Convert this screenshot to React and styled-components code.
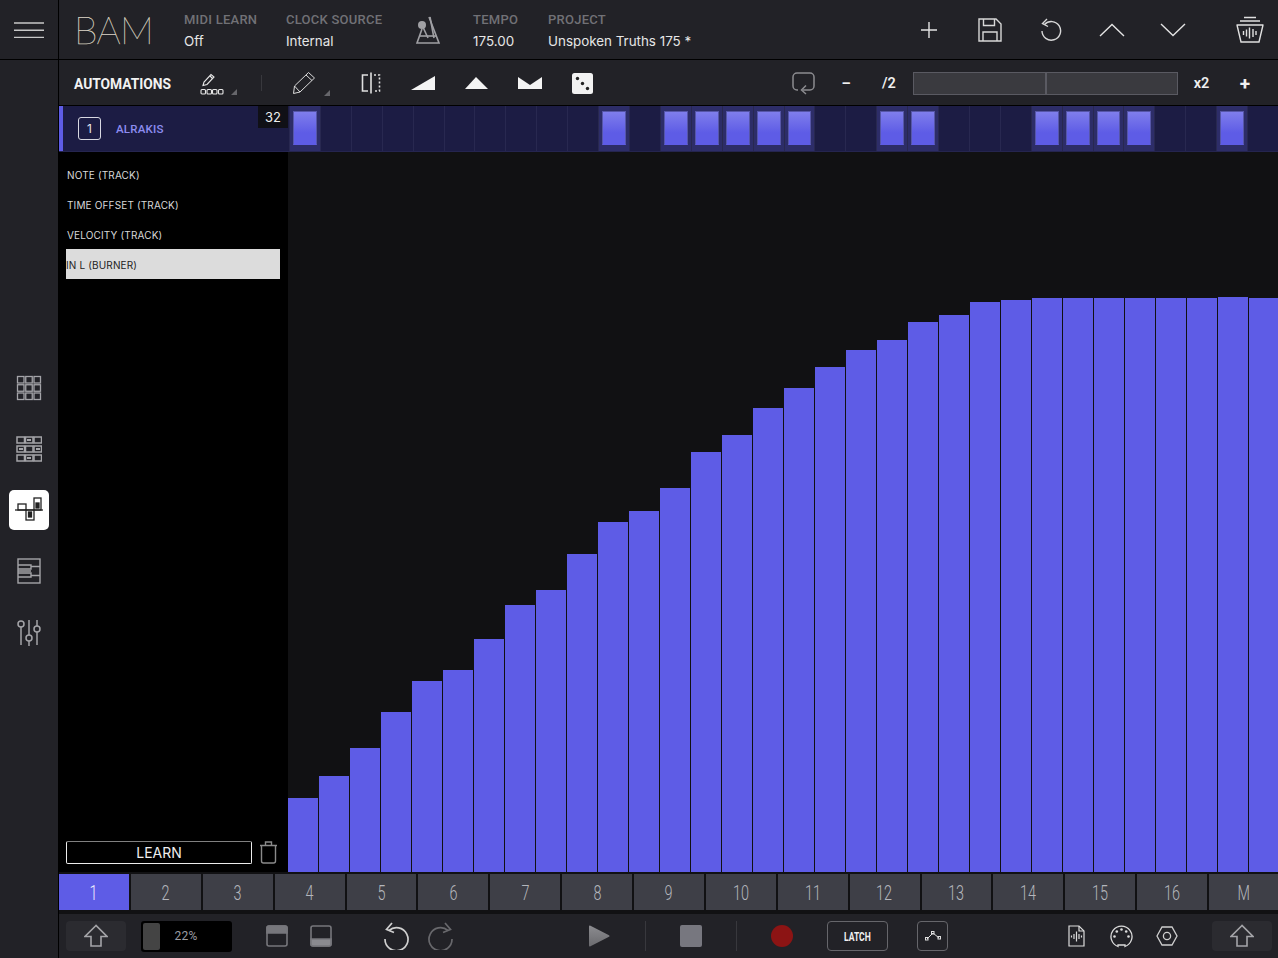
import React from "react";
import styled, { createGlobalStyle } from "styled-components";

const ACCENT = "#5e5ce6";

const BAR_TOPS = [
  798, 776, 748, 712, 681, 670, 639, 605, 590, 554, 522, 511, 488, 452, 435, 408,
  388, 367, 350, 340, 322, 315, 302, 300, 298, 298, 298, 298, 298, 298, 297, 298,
];
const ACTIVE_STEPS = [0, 10, 12, 13, 14, 15, 16, 19, 20, 24, 25, 26, 27, 30];
const TABS = ["1", "2", "3", "4", "5", "6", "7", "8", "9", "10", "11", "12", "13", "14", "15", "16", "M"];
const PARAMS = ["NOTE (TRACK)", "TIME OFFSET (TRACK)", "VELOCITY (TRACK)", "IN L (BURNER)"];

const GlobalStyle = createGlobalStyle`
  html, body { margin: 0; padding: 0; background: #222227; }
  body { font-family: Inter, "Liberation Sans", sans-serif; overflow: hidden; }
  * { box-sizing: border-box; }
  svg { display: block; }
`;

const Shell = styled.div`
  width: 1278px;
  height: 958px;
  display: flex;
  flex-direction: column;
  background: #222227;
  color: #eee;
`;

const Header = styled.header`
  height: 60px;
  flex: none;
  display: flex;
  align-items: stretch;
  border-bottom: 1px solid #000;
`;

const MenuCell = styled.div`
  width: 59px;
  flex: none;
  display: flex;
  align-items: center;
  justify-content: center;
  border-right: 1px solid #000;
`;

const Logo = styled.div`
  width: 125px;
  padding-left: 15px;
  font-family: Lato, sans-serif;
  font-weight: 100;
  font-size: 38px;
  line-height: 58px;
  letter-spacing: -0.7px;
  color: #f2ead8;
  -webkit-text-stroke: 0.25px #d8d2c6;
`;

const Field = styled.div`
  width: ${(p) => p.$w}px;
  flex: none;
  display: flex;
  flex-direction: column;
  padding-top: 12px;
`;

const FieldLabel = styled.span`
  font-family: Roboto, sans-serif;
  font-weight: 500;
  font-size: 13px;
  line-height: 16px;
  letter-spacing: 0.25px;
  color: #717176;
`;

const FieldValue = styled.span`
  margin-top: 5px;
  font-size: 13.4px;
  line-height: 17px;
  color: #e6e6e6;
`;

const IconCell = styled.div`
  width: ${(p) => p.$w || 61}px;
  margin-left: ${(p) => p.$ml || 0}px;
  flex: none;
  display: flex;
  align-items: center;
  justify-content: center;
`;

const Spacer = styled.div`
  flex: 1;
`;

const Body = styled.div`
  flex: 1;
  min-height: 0;
  display: flex;
`;

const Sidebar = styled.nav`
  width: 59px;
  flex: none;
  display: flex;
  flex-direction: column;
  align-items: center;
  justify-content: center;
  gap: 21px;
  padding: 2px 1px 0 0;
  border-right: 1px solid #000;
`;

const SideButton = styled.div`
  width: 40px;
  height: 40px;
  display: flex;
  align-items: center;
  justify-content: center;
  border-radius: 5px;
  background: ${(p) => (p.$active ? "#fff" : "transparent")};
`;

const Main = styled.main`
  flex: 1;
  min-width: 0;
  display: flex;
  flex-direction: column;
`;

const Toolbar = styled.div`
  height: 46px;
  flex: none;
  display: flex;
  align-items: center;
  border-bottom: 1px solid #000;
  padding: 1px 0 0 15px;
`;

const ToolbarTitle = styled.div`
  width: 126px;
  padding-top: 1px;
  font-family: Roboto, sans-serif;
  font-weight: 700;
  font-size: 13.8px;
  color: #f2f2f2;
`;

const Tool = styled.div`
  margin-left: ${(p) => p.$ml || 0}px;
  flex: none;
  position: relative;
  display: flex;
  align-items: center;
  justify-content: center;
`;

const CornerMark = styled.span`
  position: absolute;
  right: ${(p) => p.$right}px;
  bottom: ${(p) => p.$bottom}px;
  width: 0;
  height: 0;
  border-left: 6px solid transparent;
  border-bottom: 6px solid #66666b;
`;

const VDivider = styled.div`
  width: 1px;
  height: ${(p) => p.$h}px;
  margin-left: ${(p) => p.$ml}px;
  background: #38383d;
  flex: none;
`;

const ToolText = styled.span`
  margin-left: ${(p) => p.$ml}px;
  width: ${(p) => p.$w}px;
  flex: none;
  padding-top: 1px;
  text-align: center;
  font-family: Roboto, sans-serif;
  font-weight: ${(p) => p.$weight || 600};
  font-size: ${(p) => p.$size || 14.5}px;
  color: #f0f0f0;
`;

const Zoombar = styled.div`
  margin-left: 16px;
  width: 265px;
  height: 23px;
  flex: none;
  display: flex;
  background: #3a3a3f;
  border: 1px solid #5a5a62;
`;

const ZoomHandle = styled.div`
  width: 1px;
  margin-left: 131px;
  border-left: 2px solid #5a5a62;
`;

const TrackRow = styled.div`
  height: 46px;
  flex: none;
  display: flex;
  background: #1c1c44;
  border-bottom: 1px solid #25254f;
  position: relative;
`;

const TrackHead = styled.div`
  width: 230px;
  flex: none;
  display: flex;
  align-items: center;
  border-left: 4px solid ${ACCENT};
  padding-left: 15px;
`;

const TrackIndex = styled.div`
  width: 23px;
  height: 23px;
  display: flex;
  align-items: center;
  justify-content: center;
  border: 1px solid #d8d8e2;
  border-radius: 3px;
  font-size: 12px;
  color: #e8e8ee;
`;

const TrackName = styled.div`
  margin-left: 15px;
  font-family: Roboto, sans-serif;
  font-weight: 500;
  font-size: 11.5px;
  letter-spacing: 0.2px;
  color: #8d8cf0;
`;

const StepCount = styled.div`
  position: absolute;
  left: 199px;
  top: 0;
  width: 30px;
  height: 22px;
  display: flex;
  align-items: center;
  justify-content: center;
  background: #101016;
  font-size: 13px;
  color: #eee;
`;

const Steps = styled.div`
  flex: 1;
  min-width: 0;
  display: grid;
  grid-template-columns: repeat(32, 1fr);
`;

const Step = styled.div`
  display: flex;
  padding: 5px 3px 6px;
  border-left: 1px solid #282850;
  background: ${(p) => (p.$on ? "#2d2d68" : "transparent")};
`;

const StepBlock = styled.div`
  flex: 1;
  border: 1px solid #5656a8;
  border-bottom-color: #5e5ce6;
  background: linear-gradient(#7f7eec, #5e5ce6 65%);
`;

const Content = styled.div`
  flex: 1;
  min-height: 0;
  display: flex;
`;

const ParamPanel = styled.div`
  width: 229px;
  flex: none;
  display: flex;
  flex-direction: column;
  background: #000;
  padding: 7px 8px 8px 7px;
`;

const ParamRow = styled.div`
  height: 30px;
  display: flex;
  align-items: center;
  padding: 1px 0 0 ${(p) => (p.$selected ? 0 : 1)}px;
  font-size: 10px;
  letter-spacing: 0.15px;
  background: ${(p) => (p.$selected ? "#dcdcdc" : "transparent")};
  color: ${(p) => (p.$selected ? "#222" : "#d8d8d8")};
`;

const LearnRow = styled.div`
  margin-top: auto;
  display: flex;
  align-items: center;
  gap: 7px;
`;

const LearnButton = styled.div`
  width: 186px;
  height: 23px;
  display: flex;
  align-items: center;
  justify-content: center;
  border: 1px solid #ececec;
  border-top-color: #808080;
  border-radius: 2px;
  font-size: 14px;
  color: #eee;
`;

const Bars = styled.div`
  flex: 1;
  min-width: 0;
  overflow: hidden;
  display: grid;
  grid-template-columns: repeat(32, 30px);
  column-gap: 1px;
  align-items: end;
  background: #111113;
`;

const Bar = styled.div`
  background: ${ACCENT};
`;

const TabStrip = styled.div`
  height: 41px;
  flex: none;
  display: grid;
  grid-template-columns: repeat(17, 69.875px);
  gap: 2px;
  padding: 2px 0 3px;
  overflow: hidden;
  background: #111113;
`;

const Tab = styled.div`
  display: flex;
  align-items: center;
  justify-content: center;
  padding-top: 1px;
  font-family: Roboto, sans-serif;
  font-size: 20px;
  font-weight: 300;
  background: ${(p) => (p.$active ? ACCENT : "#3e3f47")};
  color: ${(p) => (p.$active ? "#f2f2ff" : "#b4b6bc")};
`;

const NarrowText = styled.span`
  display: inline-block;
  transform: scaleX(${(p) => p.$x});
`;

const Transport = styled.div`
  height: 45px;
  flex: none;
  display: flex;
  align-items: center;
  border-top: 1px solid #111113;
  padding-left: 7px;
`;

const ShiftButton = styled.div`
  width: 60px;
  height: 30px;
  margin-left: ${(p) => p.$ml || 0}px;
  flex: none;
  display: flex;
  align-items: center;
  justify-content: center;
  border-radius: 4px;
  background: #2b2b30;
`;

const Meter = styled.div`
  width: 91px;
  height: 31px;
  margin-left: 15px;
  flex: none;
  display: flex;
  align-items: center;
  padding: 2px;
  border-radius: 3px;
  background: #000;
`;

const MeterFill = styled.div`
  width: 17px;
  height: 100%;
  border-radius: 2px;
  background: #444;
`;

const MeterText = styled.span`
  width: 52px;
  text-align: center;
  font-family: Roboto, sans-serif;
  font-size: 12px;
  letter-spacing: 0.3px;
  color: #9c9ca2;
`;

const OutlineButton = styled.div`
  width: ${(p) => p.$w}px;
  height: 30px;
  margin-left: ${(p) => p.$ml}px;
  flex: none;
  display: flex;
  align-items: center;
  justify-content: center;
  border: 1px solid #66666b;
  border-radius: 4px;
  font-family: Roboto, sans-serif;
  font-weight: 700;
  font-size: 13px;
  color: #f0f0f0;
`;

const StopSquare = styled.div`
  width: 22px;
  height: 22px;
  margin-left: ${(p) => p.$ml}px;
  flex: none;
  border-radius: 2px;
  background: #77777f;
`;

const RecordDot = styled.div`
  width: 22px;
  height: 22px;
  margin-left: ${(p) => p.$ml}px;
  flex: none;
  border-radius: 50%;
  background: #8c1414;
`;

const Stroke = ({ w, h, children, color = "#d8d8d8", sw = 1.4 }) => (
  <svg width={w} height={h} viewBox={`0 0 ${w} ${h}`} fill="none" stroke={color} strokeWidth={sw}>
    {children}
  </svg>
);

const ShiftIcon = () => (
  <Stroke w={24} h={24} color="#a4a4a8" sw={1.6}>
    <path d="M12 1.5 1 12.5h6v9.5h10v-9.5h6z" />
  </Stroke>
);

const Metronome = () => (
  <Stroke w={26} h={30} color="#a0a0a4" sw={1.6}>
    <path d="M14 2 24 28H2L7 14" />
    <path d="M15 2 19 23" />
    <path d="M5 21h16" />
    <circle cx={7} cy={10} r={4} fill="#a0a0a4" stroke="none" />
    <path d="M7 10 13 23" />
  </Stroke>
);

const TrashBasket = () => (
  <Stroke w={30} h={28} color="#e0e0e0">
    <path d="M9 1.5h12M5 5h20M1.5 9h27M2 9l4 17h18l4-17" />
    <path d="M8.5 15v4M11.5 13.5v7M14.5 11.5v11M18 13v8M21 15v4" />
  </Stroke>
);

const PencilDots = () => (
  <Stroke w={24} h={23} color="#e8e8e8" sw={1.1}>
    <path d="M3 13.5 4 10l7-7.5 3 2.5-7 7.5z" />
    <path d="M10 4l2.5 2.5" />
    <rect x={1} y={17.5} width={4.5} height={4.5} rx={1} />
    <rect x={7} y={17.5} width={4.5} height={4.5} rx={1} />
    <rect x={12.5} y={17.5} width={4.5} height={4.5} rx={1} />
    <rect x={18.5} y={17.5} width={4.5} height={4.5} rx={1} />
  </Stroke>
);

const Pencil = () => (
  <Stroke w={24} h={24} color="#dcdcdc" sw={1}>
    <path d="M1.5 22.5 2.5 15 16.5 1.5l6 5.5L8 21z" />
    <path d="M14 4l6 5.5M2.5 15 8 21" />
  </Stroke>
);

const SplitIcon = () => (
  <Stroke w={20} h={22} color="#e0e0e0" sw={1.6}>
    <path d="M7 3H1.5v16H7" />
    <path d="M10 0.5v21" />
    <path d="M13 3h5.5v16H13" strokeDasharray="2 2" />
  </Stroke>
);

const Shape = ({ d, w = 24, h = 14 }) => (
  <svg width={w} height={h} viewBox={`0 0 ${w} ${h}`} fill="#f4f4f4">
    <path d={d} />
  </svg>
);

const Dice = () => (
  <svg width={21} height={21} viewBox="0 0 21 21">
    <rect width={21} height={21} rx={2.5} fill="#f2f2f2" />
    <circle cx={5.5} cy={5.5} r={1.7} fill="#222" />
    <circle cx={10.5} cy={10.5} r={1.7} fill="#222" />
    <circle cx={15.5} cy={15.5} r={1.7} fill="#222" />
  </svg>
);

const LoopIcon = () => (
  <Stroke w={23} h={23} color="#8c8c90" sw={1.5}>
    <path d="M6 18H5a4 4 0 0 1-4-4V5a4 4 0 0 1 4-4h13a4 4 0 0 1 4 4v9a4 4 0 0 1-4 4h-7" />
    <path d="M14 13.5 9.5 18l4.5 4" />
  </Stroke>
);

const SideIcons = [
  <Stroke w={26} h={26} color="#a4a4a8" sw={1.3} key="a">
    {[1.5, 9.75, 18].flatMap((y) =>
      [1.5, 9.75, 18].map((x) => <rect key={`${x}${y}`} x={x} y={y} width={6.5} height={6.5} />)
    )}
  </Stroke>,
  <Stroke w={26} h={26} color="#a4a4a8" sw={1.5} key="b">
    {[1, 10, 19].flatMap((y) =>
      [1, 9.5, 18].map((x) => <rect key={`${x}${y}`} x={x} y={y} width={7.5} height={6} />)
    )}
    <path d="M11 4h4M3 13h4M20 13h4M11 22h4" strokeWidth={2} />
  </Stroke>,
  <Stroke w={30} h={28} color="#222" sw={1.3} key="c">
    <path d="M1 14h28" />
    <rect x={4} y={8} width={8} height={6} />
    <rect x={12} y={14} width={8} height={10} />
    <rect x={20} y={2} width={7} height={12} />
    <rect x={14.5} y={16} width={3} height={5} fill="#222" />
    <rect x={22} y={7} width={3} height={5} fill="#222" />
  </Stroke>,
  <Stroke w={24} h={26} color="#a4a4a8" sw={1.4} key="d">
    <rect x={1} y={1} width={22} height={24} />
    <path d="M14 8.5h9M14 17.5h9M1 13h13" />
    <path d="M1 7h13v4H1M1 15h13v4H1" />
  </Stroke>,
  <Stroke w={24} h={27} color="#a4a4a8" sw={1.5} key="e">
    <circle cx={4} cy={5} r={3} />
    <path d="M4 8v18" />
    <path d="M12 1v15" />
    <circle cx={12} cy={19} r={3} />
    <path d="M12 22v5" />
    <path d="M20 1v6" />
    <circle cx={20} cy={10} r={3} />
    <path d="M20 13v13" />
  </Stroke>,
];

export default function App() {
  return (
    <Shell>
      <GlobalStyle />
      <Header>
        <MenuCell>
          <Stroke w={30} h={16} color="#c8c8c8" sw={1.4}>
            <path d="M0 1h30M0 8.2h30M0 15.4h30" />
          </Stroke>
        </MenuCell>
        <Logo>BAM</Logo>
        <Field $w={102}>
          <FieldLabel>MIDI LEARN</FieldLabel>
          <FieldValue>Off</FieldValue>
        </Field>
        <Field $w={127}>
          <FieldLabel>CLOCK SOURCE</FieldLabel>
          <FieldValue>Internal</FieldValue>
        </Field>
        <IconCell $w={30}>
          <Metronome />
        </IconCell>
        <IconCell $w={30} />
        <Field $w={75}>
          <FieldLabel>TEMPO</FieldLabel>
          <FieldValue>175.00</FieldValue>
        </Field>
        <Field $w={200}>
          <FieldLabel>PROJECT</FieldLabel>
          <FieldValue>Unspoken Truths 175 *</FieldValue>
        </Field>
        <Spacer />
        <IconCell>
          <Stroke w={16} h={16} color="#e4e4e4">
            <path d="M8 0v16M0 8h16" />
          </Stroke>
        </IconCell>
        <IconCell>
          <Stroke w={24} h={24} color="#d8d8d8">
            <path d="M1 1h17l5 5v17H1z" />
            <path d="M5.5 1v6.5h11V1M5 23v-9h14v9" />
          </Stroke>
        </IconCell>
        <IconCell>
          <Stroke w={22} h={24} color="#d8d8d8">
            <path d="M4.5 6.5a9.3 9.3 0 1 1-2.5 6.5" />
            <path d="M7 1 2.5 5.5 8 8.5" />
          </Stroke>
        </IconCell>
        <IconCell>
          <Stroke w={26} h={14} color="#e4e4e4">
            <path d="M1 13 13 1.5 25 13" />
          </Stroke>
        </IconCell>
        <IconCell>
          <Stroke w={26} h={14} color="#e4e4e4">
            <path d="M1 1 13 12.5 25 1" />
          </Stroke>
        </IconCell>
        <IconCell $w={56} $ml={19}>
          <TrashBasket />
        </IconCell>
      </Header>

      <Body>
        <Sidebar>
          {SideIcons.map((icon, i) => (
            <SideButton key={i} $active={i === 2}>
              {icon}
            </SideButton>
          ))}
        </Sidebar>

        <Main>
          <Toolbar>
            <ToolbarTitle>AUTOMATIONS</ToolbarTitle>
            <Tool>
              <PencilDots />
              <CornerMark $right={-13} $bottom={0} />
            </Tool>
            <VDivider $ml={37} $h={16} />
            <Tool $ml={30}>
              <Pencil />
              <CornerMark $right={-14} $bottom={-1} />
            </Tool>
            <Tool $ml={45}>
              <SplitIcon />
            </Tool>
            <Tool $ml={30}>
              <Shape d="M0 14 24 0v14z" />
            </Tool>
            <Tool $ml={30}>
              <Shape d="M0 13 11 1l12 12z" />
            </Tool>
            <Tool $ml={29}>
              <Shape d="M0 1l12 8 12-8v12H0z" />
            </Tool>
            <Tool $ml={30}>
              <Dice />
            </Tool>
            <Tool $ml={199}>
              <LoopIcon />
            </Tool>
            <ToolText $ml={25} $w={12} $weight={700}>
              –
            </ToolText>
            <ToolText $ml={29} $w={16}>
              /2
            </ToolText>
            <Zoombar>
              <ZoomHandle />
            </Zoombar>
            <ToolText $ml={15} $w={17}>
              x2
            </ToolText>
            <ToolText $ml={27} $w={16} $size={19} $weight={700}>
              +
            </ToolText>
          </Toolbar>

          <TrackRow>
            <TrackHead>
              <TrackIndex>1</TrackIndex>
              <TrackName>ALRAKIS</TrackName>
            </TrackHead>
            <StepCount>32</StepCount>
            <Steps>
              {BAR_TOPS.map((_, i) => {
                const on = ACTIVE_STEPS.includes(i);
                return (
                  <Step key={i} $on={on}>
                    {on && <StepBlock />}
                  </Step>
                );
              })}
            </Steps>
          </TrackRow>

          <Content>
            <ParamPanel>
              {PARAMS.map((p, i) => (
                <ParamRow key={p} $selected={i === 3}>
                  {p}
                </ParamRow>
              ))}
              <LearnRow>
                <LearnButton>LEARN</LearnButton>
                <Stroke w={19} h={23} color="#8a8a8a">
                  <path d="M1 4.5h17M6.5 4.5V1h6v3.5M2.5 4.5V20a2 2 0 0 0 2 2h10a2 2 0 0 0 2-2V4.5" />
                </Stroke>
              </LearnRow>
            </ParamPanel>
            <Bars>
              {BAR_TOPS.map((top, i) => (
                <Bar key={i} style={{ height: 872 - top }} />
              ))}
            </Bars>
          </Content>

          <TabStrip>
            {TABS.map((t, i) => (
              <Tab key={t} $active={i === 0}>
                <NarrowText $x={0.72}>{t}</NarrowText>
              </Tab>
            ))}
          </TabStrip>

          <Transport>
            <ShiftButton>
              <ShiftIcon />
            </ShiftButton>
            <Meter>
              <MeterFill />
              <MeterText>22%</MeterText>
            </Meter>
            <Tool $ml={34}>
              <Stroke w={22} h={22} color="#77777c" sw={1.6}>
                <rect x={1} y={1} width={20} height={20} rx={2} />
                <path d="M1 3a2 2 0 0 1 2-2h16a2 2 0 0 1 2 2v5H1z" fill="#77777c" />
              </Stroke>
            </Tool>
            <Tool $ml={22}>
              <Stroke w={22} h={22} color="#77777c" sw={1.6}>
                <rect x={1} y={1} width={20} height={20} rx={2} />
                <path d="M1 14h20v5a2 2 0 0 1-2 2H3a2 2 0 0 1-2-2z" fill="#8a8a8f" />
              </Stroke>
            </Tool>
            <Tool $ml={51}>
              <Stroke w={26} h={28} color="#cfcfcf" sw={1.7}>
                <path d="M6 8.5a11.5 11.5 0 1 1-4 8.5" />
                <path d="M9 1 3.5 7.5 11 10.5" />
              </Stroke>
            </Tool>
            <Tool $ml={19}>
              <Stroke w={26} h={28} color="#68686c" sw={1.7}>
                <path d="M20 8.5a11.5 11.5 0 1 0 4 8.5" />
                <path d="M17 1l5.5 6.5-7.5 3" />
              </Stroke>
            </Tool>
            <Tool $ml={134}>
              <svg width={22} height={22} viewBox="0 0 22 22">
                <defs>
                  <linearGradient id="playGrad" x1="0" y1="0" x2="0" y2="1">
                    <stop offset="0" stopColor="#8c8c90" />
                    <stop offset="1" stopColor="#6a6a6e" />
                  </linearGradient>
                </defs>
                <path d="M1 1.5a1 1 0 0 1 1.5-.8l18.5 9.5a1 1 0 0 1 0 1.6L2.5 21.3A1 1 0 0 1 1 20.5z" fill="url(#playGrad)" />
              </svg>
            </Tool>
            <VDivider $ml={35} $h={30} />
            <StopSquare $ml={34} />
            <VDivider $ml={34} $h={30} />
            <RecordDot $ml={34} />
            <OutlineButton $w={61} $ml={34}>
              <NarrowText $x={0.66}>LATCH</NarrowText>
            </OutlineButton>
            <OutlineButton $w={31} $ml={29}>
              <Stroke w={16} h={10} color="#e0e0e0" sw={1}>
                <path d="M2 8 8 2l6 5" />
                <rect x={0.5} y={6.5} width={2.5} height={2.5} />
                <rect x={6.5} y={0.5} width={2.5} height={2.5} />
                <rect x={13} y={5.5} width={2.5} height={2.5} />
              </Stroke>
            </OutlineButton>
            <Tool $ml={120}>
              <Stroke w={17} h={22} color="#dcdcdc" sw={1.2}>
                <path d="M1 1h10l5 5v15H1z" />
                <path d="M11 1v5h5" />
                <path d="M3.5 10.5v2M6 9v5M8.5 6.5v10M11 9v5M13.5 10.5v2" />
              </Stroke>
            </Tool>
            <Tool $ml={25}>
              <svg width={23} height={23} viewBox="0 0 23 23" fill="none" stroke="#dcdcdc" strokeWidth={1.3}>
                <path d="M8 21.5a10.5 10.5 0 1 1 7 0v-1.5h-7z" />
                <g fill="#dcdcdc" stroke="none">
                  <circle cx={4.5} cy={11.5} r={1.3} />
                  <circle cx={6.8} cy={6.5} r={1.3} />
                  <circle cx={11.5} cy={4.5} r={1.3} />
                  <circle cx={16.2} cy={6.5} r={1.3} />
                  <circle cx={18.5} cy={11.5} r={1.3} />
                </g>
              </svg>
            </Tool>
            <Tool $ml={23}>
              <Stroke w={22} h={20} color="#cfcfcf" sw={1.3}>
                <path d="M1 10 6 1h10l5 9-5 9H6z" />
                <circle cx={11} cy={10} r={3.6} />
              </Stroke>
            </Tool>
            <ShiftButton $ml={34}>
              <ShiftIcon />
            </ShiftButton>
          </Transport>
        </Main>
      </Body>
    </Shell>
  );
}
